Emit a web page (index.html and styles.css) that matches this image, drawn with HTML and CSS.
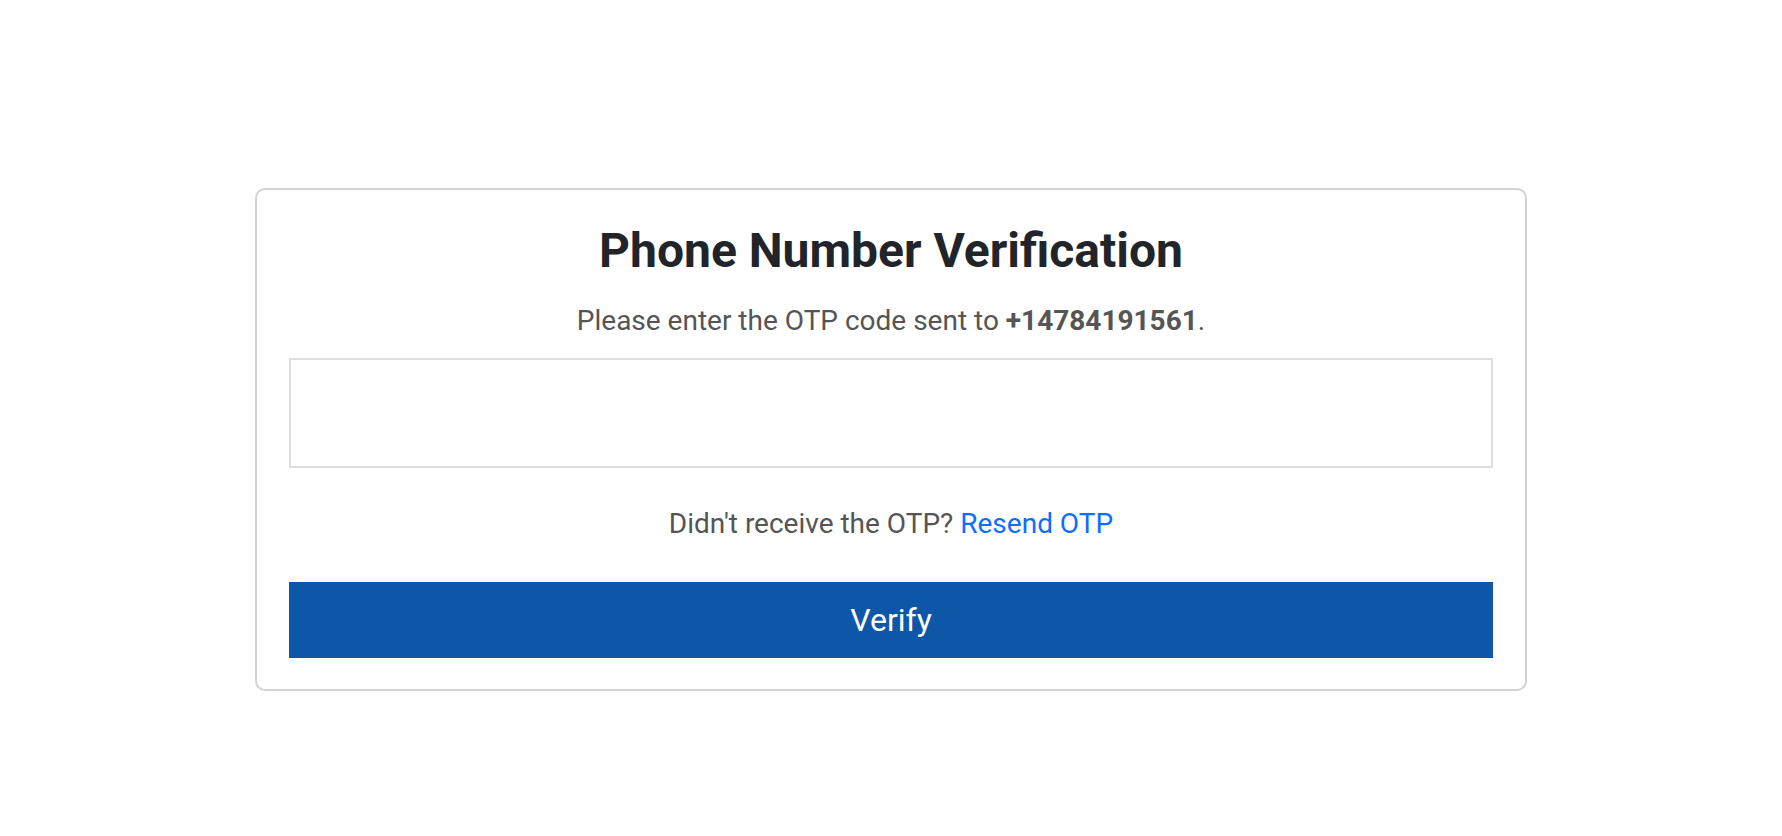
FILE: index.html
```html
<!DOCTYPE html>
<html lang="en">
<head>
<meta charset="utf-8">
<title>Phone Number Verification</title>
<link rel="stylesheet" href="styles.css">
</head>
<body>
<main class="card">
  <h1 class="title">Phone Number Verification</h1>
  <p class="subtitle">Please enter the OTP code sent to <strong>+14784191561</strong>.</p>
  <input class="otp-input" type="text" aria-label="OTP code">
  <p class="resend">Didn't receive the OTP? <a href="#" class="resend-link">Resend OTP</a></p>
  <button class="verify-btn" type="button">Verify</button>
</main>
</body>
</html>
```
FILE: styles.css
```css
html, body {
  margin: 0;
  padding: 0;
  background: #ffffff;
}

body {
  font-family: Roboto, "Liberation Sans", Arial, sans-serif;
  font-size: 28px;
  color: #555555;
}

.card {
  box-sizing: border-box;
  width: 1272px;
  margin: 188px auto 0;
  padding: 32px 32px 31px;
  border: 2px solid #d2d2d2;
  border-radius: 10px;
  display: flex;
  flex-direction: column;
  align-items: stretch;
}

.title {
  margin: 0;
  font-size: 48px;
  line-height: 1.2;
  font-weight: 700;
  color: #212529;
  text-align: center;
}

.subtitle {
  margin: 20px 0 0;
  line-height: 1.5;
  text-align: center;
}

.subtitle strong {
  font-weight: 700;
}

.otp-input {
  box-sizing: border-box;
  margin: 16px 0 0;
  height: 110px;
  width: 100%;
  border: 2px solid #dedede;
  background: #ffffff;
  font: inherit;
  padding: 0 16px;
  outline: none;
}

.resend {
  margin: 35px 0 0;
  line-height: 1.5;
  text-align: center;
}

.resend-link {
  color: #0d6efd;
  text-decoration: none;
}

.verify-btn {
  margin: 37px 0 0;
  height: 76px;
  border: none;
  background: #0e56a8;
  color: #ffffff;
  font-family: inherit;
  font-size: 32px;
  line-height: 1.5;
  cursor: pointer;
}
```
